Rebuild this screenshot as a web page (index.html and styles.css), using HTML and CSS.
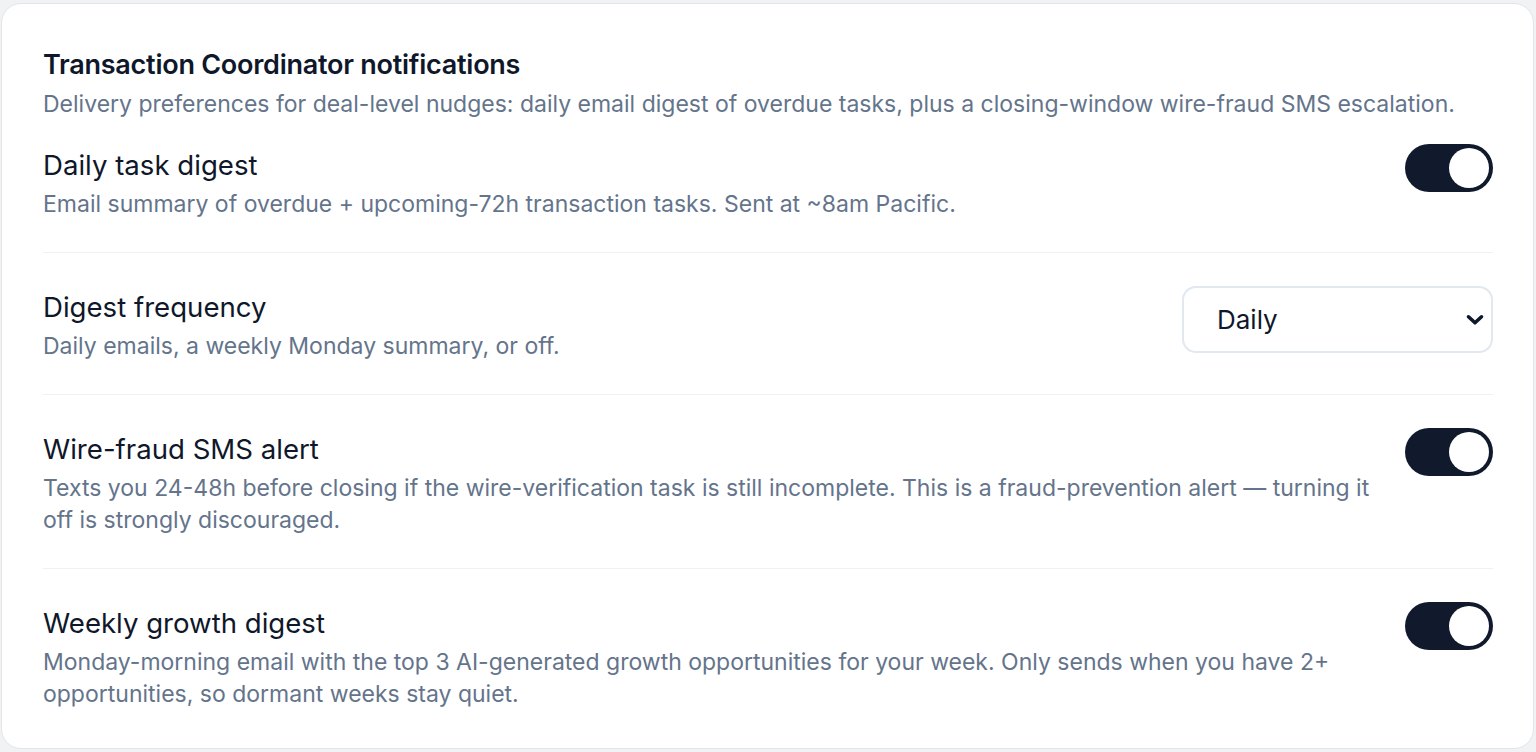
FILE: index.html
```html
<!DOCTYPE html>
<html lang="en">
<head>
<meta charset="utf-8">
<title>Transaction Coordinator notifications</title>
<link rel="stylesheet" href="styles.css">
</head>
<body>
<section class="card">
  <header class="card-header">
    <h2 class="card-title">Transaction Coordinator notifications</h2>
    <p class="card-desc">Delivery preferences for deal-level nudges: daily email digest of overdue tasks, plus a closing-window wire-fraud SMS escalation.</p>
  </header>
  <div class="rows">
    <div class="row">
      <div class="row-text">
        <h3 class="row-title">Daily task digest</h3>
        <p class="row-desc">Email summary of overdue + upcoming-72h transaction tasks. Sent at ~8am Pacific.</p>
      </div>
      <button class="toggle on" type="button" aria-pressed="true"><span class="knob"></span></button>
    </div>
    <div class="row">
      <div class="row-text">
        <h3 class="row-title">Digest frequency</h3>
        <p class="row-desc">Daily emails, a weekly Monday summary, or off.</p>
      </div>
      <div class="select-wrap">
        <select class="select">
          <option selected>Daily</option>
          <option>Weekly</option>
          <option>Off</option>
        </select>
        <svg class="chev" viewBox="0 0 20 12" width="20" height="12" aria-hidden="true"><path d="M3.5 2.8 L10 8.8 L16.5 2.8" fill="none" stroke="#0f172a" stroke-width="3.6" stroke-linecap="round" stroke-linejoin="round"/></svg>
      </div>
    </div>
    <div class="row">
      <div class="row-text">
        <h3 class="row-title">Wire-fraud SMS alert</h3>
        <p class="row-desc">Texts you 24-48h before closing if the wire-verification task is still incomplete. This is a fraud-prevention alert — turning it off is strongly discouraged.</p>
      </div>
      <button class="toggle on" type="button" aria-pressed="true"><span class="knob"></span></button>
    </div>
    <div class="row">
      <div class="row-text">
        <h3 class="row-title">Weekly growth digest</h3>
        <p class="row-desc">Monday-morning email with the top 3 AI-generated growth opportunities for your week. Only sends when you have 2+ opportunities, so dormant weeks stay quiet.</p>
      </div>
      <button class="toggle on" type="button" aria-pressed="true"><span class="knob"></span></button>
    </div>
  </div>
</section>
</body>
</html>
```
FILE: styles.css
```css
* { box-sizing: border-box; }
html, body { margin: 0; padding: 0; }
body {
  background: #f1f2f4;
  font-family: Inter, "Noto Sans", sans-serif;
  color: #0f172a;
  height: 752px;
  overflow: hidden;
}
.card {
  margin: 3px 2px 0 1px;
  background: #ffffff;
  border: 1px solid #e3e5e9;
  border-radius: 20px;
  padding: 45px 40px 38px 41px;
}
.card-title {
  margin: 0;
  font-size: 27px;
  line-height: 32px;
  font-weight: 600;
  color: #0f172a;
  letter-spacing: -0.25px;
}
.card-desc {
  margin: 7px 0 0;
  font-size: 23px;
  line-height: 32px;
  color: #64748b;
}
.rows { margin-top: 24px; }
.row {
  display: flex;
  align-items: flex-start;
  justify-content: space-between;
  gap: 32px;
  padding: 33px 0 32px;
  border-bottom: 1px solid #eef1f5;
}
.row:first-child { padding-top: 0; }
.row:last-child { border-bottom: none; padding-bottom: 0; }
.row-text { flex: 1; min-width: 0; }
.row-title {
  margin: 0;
  font-size: 27.6px;
  line-height: 42px;
  font-weight: 400;
  color: #0f172a;
}
.row-desc {
  margin: 2px 0 0;
  font-size: 23px;
  line-height: 32px;
  color: #64748b;
}
.toggle {
  flex: none;
  position: relative;
  width: 88px;
  height: 48px;
  border: none;
  border-radius: 24px;
  background: #111a2d;
  padding: 0;
  cursor: pointer;
}
.knob {
  position: absolute;
  top: 4px;
  right: 4px;
  width: 40px;
  height: 40px;
  border-radius: 50%;
  background: #ffffff;
}
.select-wrap {
  flex: none;
  position: relative;
  width: 311px;
  height: 67px;
}
.select {
  width: 100%;
  height: 100%;
  appearance: none;
  -webkit-appearance: none;
  border: 2px solid #e2e8f0;
  border-radius: 14px;
  background: #ffffff;
  font-family: inherit;
  font-size: 26px;
  color: #0f172a;
  padding: 0 40px 0 33px;
}
.chev {
  position: absolute;
  right: 8px;
  top: 50%;
  transform: translateY(-50%);
  pointer-events: none;
}
```
